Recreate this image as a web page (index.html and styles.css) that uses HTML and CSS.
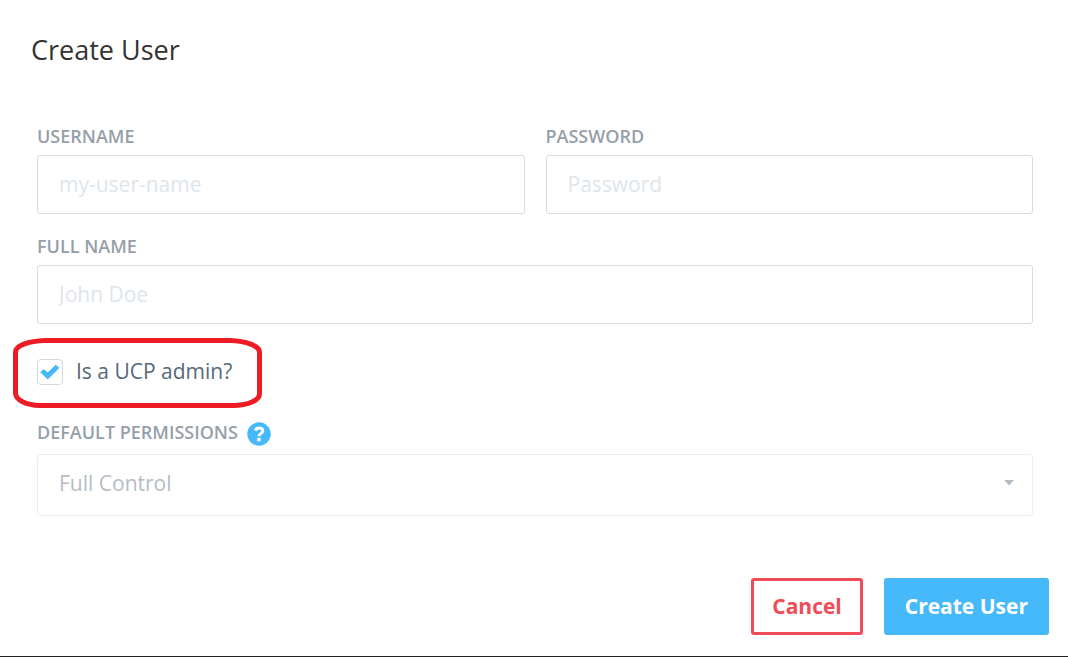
FILE: index.html
```html
<!DOCTYPE html>
<html lang="en">
<head>
<meta charset="utf-8">
<meta name="viewport" content="width=device-width, initial-scale=1">
<title>Create User</title>
<link rel="stylesheet" href="styles.css">
</head>
<body>
<main class="dialog">
  <h1 class="title">Create User</h1>
  <form class="form">
    <div class="fields">
      <div class="row">
        <div class="field">
          <label class="label" for="username">USERNAME</label>
          <input class="input" id="username" type="text" placeholder="my-user-name">
        </div>
        <div class="field">
          <label class="label" for="password">PASSWORD</label>
          <input class="input" id="password" type="password" placeholder="Password">
        </div>
      </div>
      <div class="field">
        <label class="label" for="fullname">FULL NAME</label>
        <input class="input" id="fullname" type="text" placeholder="John Doe">
      </div>
      <div class="admin">
        <span class="check">
          <input class="checkbox" id="admin" type="checkbox" checked>
          <svg class="tick" viewBox="0 0 26 26" aria-hidden="true"><path d="M3.300 13.200 6.800 10 10.600 13.600 18.800 5.700 22.300 8.900 10.800 20.400Z"/></svg>
        </span>
        <label class="admin-label" for="admin">Is a UCP admin?</label>
        <svg class="marker" viewBox="0 0 250 70" aria-hidden="true"><path d="M32 2.500H217C233 3 246.500 8 246.500 14V56C246.500 62 236 67 222 67.500H27C13 67 2.500 62 2.500 55V14C2.500 8 15 3 32 2.500Z"/></svg>
      </div>
      <div class="permissions">
        <div class="label-row">
          <label class="label" for="permissions">DEFAULT PERMISSIONS</label>
          <svg class="help" viewBox="0 0 24 24" role="img" aria-label="Help"><circle cx="12" cy="12" r="11.700"/><path class="mark" d="M8.300 8.600C9 6.800 10.200 6.100 12 6.100 14.200 6.100 15.800 7.300 15.800 9 15.800 11.500 12 11.300 12 14.300"/><path class="dot" d="M10.200 15.800H13.700V19.300H10.200Z"/></svg>
        </div>
        <div class="select-wrap">
          <select class="select" id="permissions" disabled>
            <option>Full Control</option>
          </select>
          <svg class="caret" viewBox="0 0 10 6" aria-hidden="true"><path d="M0 0H10L5 5.500Z"/></svg>
        </div>
      </div>
    </div>
    <div class="actions">
      <button class="button cancel" type="button">Cancel</button>
      <button class="button create" type="submit">Create User</button>
    </div>
  </form>
</main>
</body>
</html>
```
FILE: styles.css
```css
* {
  box-sizing: border-box;
}

body {
  margin: 0;
  background: #fff;
  font-family: "Open Sans", "Noto Sans", sans-serif;
  font-size: 21px;
}

.dialog {
  padding: 32px 19px 21px 31px;
  border-bottom: 1px solid #222;
}

.title {
  margin: 0 0 56px;
  color: #333;
  font-size: 27px;
  font-weight: 400;
  line-height: 36px;
}

.fields {
  display: flex;
  flex-direction: column;
  padding: 0 16px 0 6px;
  gap: 20px;
}

.row {
  display: grid;
  grid-template-columns: 1fr 1fr;
  gap: 21px;
}

.field {
  display: flex;
  flex-direction: column;
  gap: 7px;
}

.label {
  color: #959faa;
  font-size: 18px;
  font-weight: 600;
  line-height: 24px;
}

.input,
.select {
  width: 100%;
  border: 1px solid #d9dcde;
  border-radius: 3px;
  background: #fff;
  font: inherit;
}

.input {
  height: 59px;
  padding: 0 21px 2px;
}

.input::placeholder {
  color: #dde5ec;
  opacity: 1;
}

.admin {
  position: relative;
  display: flex;
  align-items: center;
  gap: 13px;
  height: 56px;
}

.check {
  position: relative;
  width: 26px;
  height: 26px;
}

.checkbox {
  display: block;
  width: 26px;
  height: 26px;
  margin: 0;
  border: 1px solid #d5d8da;
  border-radius: 4px;
  appearance: none;
  background: #fff;
}

.tick {
  position: absolute;
  inset: 0;
  fill: #46b9fa;
  visibility: hidden;
  pointer-events: none;
}

.checkbox:checked + .tick {
  visibility: visible;
}

.admin-label {
  padding-bottom: 2px;
  color: #556978;
  line-height: 28px;
}

.marker {
  position: absolute;
  top: -6px;
  left: -24px;
  width: 250px;
  height: 70px;
  fill: none;
  stroke: #ed1c24;
  stroke-width: 5;
  pointer-events: none;
}

.permissions {
  display: flex;
  flex-direction: column;
  gap: 8px;
}

.label-row {
  display: flex;
  align-items: flex-start;
  gap: 9px;
}

.help {
  width: 24px;
  height: 24px;
  margin-top: 2px;
  fill: #46b9fa;
}

.mark {
  fill: none;
  stroke: #fff;
  stroke-width: 3;
}

.dot {
  fill: #fff;
}

.select-wrap {
  position: relative;
}

.select {
  display: block;
  height: 62px;
  padding: 0 40px 4px 21px;
  border-color: #eceeef;
  appearance: none;
  color: #b3bdc6;
  opacity: 1;
}

.caret {
  position: absolute;
  top: 26px;
  right: 19px;
  width: 10px;
  height: 6px;
  fill: #b3bdc6;
  pointer-events: none;
}

.actions {
  display: flex;
  justify-content: flex-end;
  gap: 21px;
  margin-top: 62px;
}

.button {
  height: 57px;
  padding: 0 18px 2px;
  border: 3px solid #46b9fa;
  border-radius: 3px;
  font: inherit;
  font-weight: 700;
}

.cancel {
  border-color: #f04b56;
  background: #fff;
  color: #f04b56;
}

.create {
  background: #46b9fa;
  color: #fff;
}
```
